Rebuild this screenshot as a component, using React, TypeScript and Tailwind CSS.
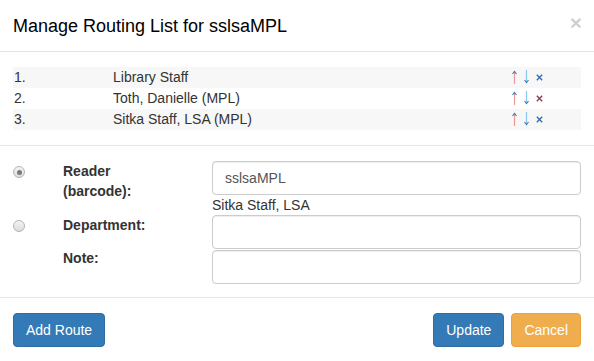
import React from 'react';

const routes = [
  { n: '1.', name: 'Library Staff' },
  { n: '2.', name: 'Toth, Danielle (MPL)' },
  { n: '3.', name: 'Sitka Staff, LSA (MPL)' },
];

const UpArrow = () => (
  <svg width="5" height="14" viewBox="0 0 5 14" className="block">
    <line x1="2.5" y1="1.5" x2="2.5" y2="14" stroke="#eb9a9a" strokeWidth="1.2" />
    <polyline points="0.5,4 2.5,1.5 4.5,4" fill="none" stroke="#3f78b0" strokeWidth="1.1" />
  </svg>
);

const DownArrow = () => (
  <svg width="5" height="14" viewBox="0 0 5 14" className="block">
    <line x1="2.5" y1="0" x2="2.5" y2="12.5" stroke="#8cc6ee" strokeWidth="1.2" />
    <polyline points="0.5,10 2.5,12.5 4.5,10" fill="none" stroke="#3f78b0" strokeWidth="1.1" />
  </svg>
);

const Remove = ({ dark }: { dark?: boolean }) => (
  <svg width="7" height="7" viewBox="0 0 7 7" className="block">
    <path d="M0.8 0.8 L6.2 6.2 M6.2 0.8 L0.8 6.2" stroke={dark ? '#8a3b4a' : '#2f6aa8'} strokeWidth="1.3" />
  </svg>
);

const Radio = ({ checked }: { checked?: boolean }) => (
  <span className="w-[12px] h-[12px] rounded-full border border-[#b4b4b4] bg-gradient-to-b from-[#f4f4f4] to-[#dcdcdc] flex items-center justify-center">
    {checked && <span className="w-[5px] h-[5px] rounded-full bg-[#7a7a7a]" />}
  </span>
);

const inputCls =
  'w-[369px] h-[34px] border border-[#ccc] rounded-[4px] px-[12px] text-[14px] text-[#555] outline-none shadow-[inset_0_1px_1px_rgba(0,0,0,0.075)]';

export default function App() {
  return (
    <div className="w-[594px] h-[361px] bg-white text-[#333] text-[14px] font-['Liberation_Sans',Arial,sans-serif] overflow-hidden">
      {/* header */}
      <div className="h-[52px] border-b border-[#e5e5e5] pl-[13px] pr-[12px] pt-[16px] flex justify-between">
        <h4 className="text-[18px] leading-[20px] text-black">Manage Routing List for sslsaMPL</h4>
        <span className="text-[21px] font-bold leading-[20px] text-black/20 -mt-[3px]">×</span>
      </div>

      {/* routing list */}
      <div className="h-[94px] border-b border-[#e5e5e5] pt-[15px] px-[13px]">
        {routes.map((r, i) => (
          <div
            key={r.n}
            className={`h-[21px] flex items-start leading-[20px] ${i % 2 === 0 ? 'bg-[#f7f7f7]' : 'bg-white'}`}
          >
            <span className="w-[100px] pl-[1px]">{r.n}</span>
            <span className="w-[399px]">{r.name}</span>
            <span className="flex items-start gap-[7px] pt-[3px]">
              <UpArrow />
              <DownArrow />
              <span className="pt-[4px]">
                <Remove dark={i === 1} />
              </span>
            </span>
          </div>
        ))}
      </div>

      {/* form */}
      <div className="h-[152px] border-b border-[#e5e5e5] pt-[15px] px-[13px]">
        <div className="flex h-[54px]">
          <div className="w-[50px] pt-[5px]">
            <Radio checked />
          </div>
          <label className="w-[149px] font-bold leading-[20px]">
            Reader
            <br />
            (barcode):
          </label>
          <div>
            <input className={inputCls} defaultValue="sslsaMPL" />
            <div className="leading-[20px] text-[#333]">Sitka Staff, LSA</div>
          </div>
        </div>
        <div className="flex h-[35px]">
          <div className="w-[50px] pt-[5px]">
            <Radio />
          </div>
          <label className="w-[149px] font-bold leading-[20px]">Department:</label>
          <input className={inputCls} />
        </div>
        <div className="flex h-[34px]">
          <div className="w-[50px]" />
          <label className="w-[149px] font-bold leading-[20px] -mt-[2px]">Note:</label>
          <input className={inputCls} />
        </div>
      </div>

      {/* footer */}
      <div className="pt-[15px] px-[13px] flex justify-between">
        <button className="h-[34px] px-[12px] rounded-[4px] bg-[#337ab7] border border-[#2e6da4] text-white leading-[20px]">
          Add Route
        </button>
        <div className="flex gap-[7px]">
          <button className="h-[34px] px-[12px] rounded-[4px] bg-[#337ab7] border border-[#2e6da4] text-white leading-[20px]">
            Update
          </button>
          <button className="h-[34px] px-[12px] rounded-[4px] bg-[#f0ad4e] border border-[#eea236] text-white leading-[20px]">
            Cancel
          </button>
        </div>
      </div>
    </div>
  );
}
